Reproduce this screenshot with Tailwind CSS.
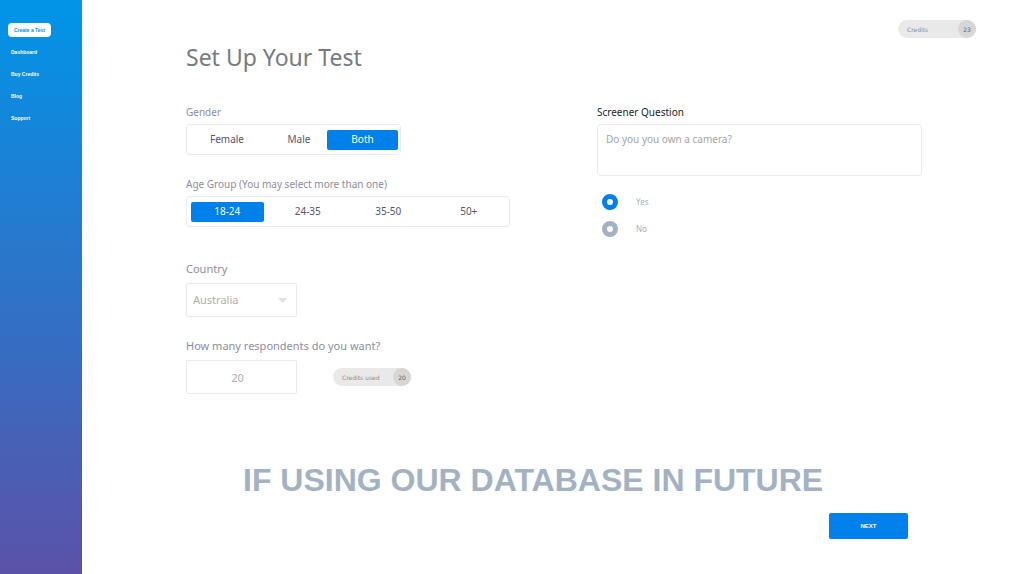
<!DOCTYPE html>
<html lang="en">
<head>
  <meta charset="UTF-8">
  <meta name="viewport" content="width=device-width, initial-scale=1.0">
  <title>Set Up Your Test</title>
  <script src="https://cdn.jsdelivr.net/npm/@tailwindcss/browser@4"></script>
</head>
<body class="flex min-h-screen bg-white font-['Noto_Sans',sans-serif]">
  <!-- Sidebar -->
  <nav class="flex w-[82px] shrink-0 flex-col items-start bg-linear-to-b/srgb from-[#0095e8] to-[#5b52a8] pl-2 pt-[23px] font-['Liberation_Sans',sans-serif] text-[5px] leading-[14px] font-bold text-white">
    <a href="#" class="mb-2 w-[43px] rounded-sm bg-white text-center text-[#0a8ee6]">Create a Test</a>
    <div class="flex flex-col gap-2 pl-[3px]">
      <a href="#">Dashboard</a>
      <a href="#">Buy Credits</a>
      <a href="#">Blog</a>
      <a href="#">Support</a>
    </div>
  </nav>

  <!-- Main Content -->
  <main class="flex-1 pl-26 pr-12 pt-5">
    <header class="flex items-start justify-between">
      <h1 class="mt-5 text-[23px] leading-[34px] text-[#767b80]">Set Up Your Test</h1>
      <div class="flex h-[18px] w-[78px] items-center justify-between rounded-full bg-[#e9e9e9] pl-[9px] font-['DejaVu_Sans',sans-serif] text-[6px] text-[#8c8c8c]">
        <span>Credits</span>
        <span class="grid size-[18px] place-items-center rounded-full bg-[#d6d6d6] text-[#60626c]">23</span>
      </div>
    </header>

    <form class="mr-[54px] mt-[30px]">
      <div class="grid grid-cols-[411fr_325fr]">
        <div>
          <!-- Gender -->
          <h2 id="gender" class="text-[10px] leading-4 text-[#8d8c9c]">Gender</h2>
          <div role="group" aria-labelledby="gender" class="mt-1 grid h-[31px] w-[215px] grid-cols-[80px_60px_71px] items-center rounded-sm border border-[#e6ebf1] text-[10px] text-[#56546e]">
            <button type="button" class="h-5">Female</button>
            <button type="button" class="h-5 pl-1">Male</button>
            <button type="button" aria-pressed="true" class="h-5 rounded-xs bg-[#0080ea] text-white">Both</button>
          </div>

          <!-- Age group -->
          <h2 id="age" class="mt-[21px] text-[10px] leading-4 text-[#8d8c9c]">Age Group (You may select more than one)</h2>
          <div role="group" aria-labelledby="age" class="mt-1 grid h-[31px] w-[324px] grid-cols-4 items-center rounded-sm border border-[#e6ebf1] text-[10px] text-[#56546e]">
            <button type="button" aria-pressed="true" class="mx-1 h-5 rounded-xs bg-[#0080ea] text-white">18-24</button>
            <button type="button" class="mx-1 h-5">24-35</button>
            <button type="button" class="mx-1 h-5">35-50</button>
            <button type="button" class="mx-1 h-5">50+</button>
          </div>

          <!-- Country -->
          <label for="country" class="mt-[34px] block text-[11px] leading-4 text-[#8d8c9c]">Country</label>
          <div class="relative mt-[6px] w-[111px]">
            <select id="country" class="h-[34px] w-full appearance-none rounded-xs border border-[#e6ebf1] pl-[6px] text-[11px] text-[#b0adad]">
              <option>Australia</option>
            </select>
            <svg class="pointer-events-none absolute right-[10px] top-[15px] h-[5px] w-[9px]" viewBox="0 0 9 5" fill="#e8dadd"><path d="M0 0h9L4.500 5z"/></svg>
          </div>

          <!-- Respondents -->
          <label for="respondents" class="mt-[21px] block text-[11px] leading-4 text-[#8d8c9c]">How many respondents do you want?</label>
          <div class="mt-[6px] flex items-center">
            <input id="respondents" type="text" value="20" class="h-[34px] w-[111px] rounded-xs border border-[#e6ebf1] pr-2 text-center text-[11px] text-[#b0adad]">
            <div class="ml-9 flex h-[18px] w-[78px] items-center justify-between rounded-full bg-[#e9e9e9] pl-[9px] font-['DejaVu_Sans',sans-serif] text-[6px] text-[#8c8c8c]">
              <span>Credits used</span>
              <span class="grid size-[18px] place-items-center rounded-full bg-[#d6d6d6] text-[#60626c]">20</span>
            </div>
          </div>
        </div>

        <!-- Screener -->
        <div>
          <label for="question" class="block text-[10px] leading-4 text-[#1c1c1e]">Screener Question</label>
          <textarea id="question" placeholder="Do you you own a camera?" class="mt-1 block h-[52px] w-full resize-none rounded-sm border border-[#e6ebf1] px-2 py-[6px] text-[10px] leading-4 placeholder:text-[#a3a4a8]"></textarea>
          <div class="mt-[18px] flex flex-col gap-[11px] pl-[5px] text-[8px] leading-4 text-[#a2b2c3]">
            <label class="flex items-center gap-[18px]">
              <input type="radio" name="answer" checked class="size-4 appearance-none rounded-full border-5 border-[#a2b2c3] bg-white checked:border-[#0080ea]">
              Yes
            </label>
            <label class="flex items-center gap-[18px]">
              <input type="radio" name="answer" class="size-4 appearance-none rounded-full border-5 border-[#a2b2c3] bg-white checked:border-[#0080ea]">
              No
            </label>
          </div>
        </div>
      </div>

      <p class="mt-[66px] pl-[57px] font-['Liberation_Sans',sans-serif] text-[32px] leading-10 font-bold text-[#a2b2c3]">IF USING OUR DATABASE IN FUTURE</p>
      <div class="mt-[13px] flex justify-end pr-[14px]">
        <button type="submit" class="h-[26px] w-[79px] rounded-xs bg-[#0080ea] font-['Liberation_Sans',sans-serif] text-[6px] font-bold text-white">NEXT</button>
      </div>
    </form>
  </main>
</body>
</html>
